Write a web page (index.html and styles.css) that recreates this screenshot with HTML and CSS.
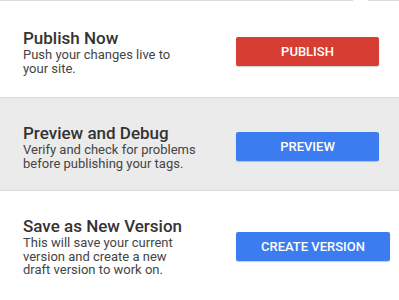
FILE: index.html
```html
<!DOCTYPE html>
<html>
<head>
<meta charset="utf-8">
<link rel="stylesheet" href="styles.css">
</head>
<body>
<div class="panel">
  <div class="row row-first">
    <div class="info">
      <div class="title">Publish Now</div>
      <div class="desc">Push your changes live to<br>your site.</div>
    </div>
    <button class="btn btn-red">PUBLISH</button>
  </div>
  <div class="row row-gray">
    <div class="info">
      <div class="title">Preview and Debug</div>
      <div class="desc">Verify and check for problems<br>before publishing your tags.</div>
    </div>
    <button class="btn btn-blue">PREVIEW</button>
  </div>
  <div class="row">
    <div class="info">
      <div class="title">Save as New Version</div>
      <div class="desc">This will save your current<br>version and create a new<br>draft version to work on.</div>
    </div>
    <button class="btn btn-blue">CREATE VERSION</button>
  </div>
</div>
</body>
</html>
```
FILE: styles.css
```css
html, body {
  margin: 0;
  padding: 0;
  background: #fff;
}
body {
  font-family: Roboto, "Liberation Sans", Arial, sans-serif;
  width: 399px;
  height: 300px;
  overflow: hidden;
}
.panel {
  position: relative;
  border-top: 1px solid #dcdcdc;
}
.panel::before {
  content: "";
  position: absolute;
  top: -1px;
  left: 353px;
  width: 15px;
  height: 1px;
  background: #fff;
}
.row {
  display: grid;
  grid-template-columns: 236px auto;
  align-items: center;
  justify-items: start;
  padding: 25px 0 20px 0;
}
.row-first {
  padding: 27px 0 22px 0;
  border-bottom: 1px solid #d9d9d9;
}
.row-gray {
  background: #ebebeb;
  border-bottom: 1px solid #d9d9d9;
}
.info {
  padding-left: 23px;
}
.title {
  font-size: 17px;
  line-height: 20px;
  font-weight: 500;
  color: #333;
}
.desc {
  font-size: 13px;
  line-height: 13.5px;
  color: #444;
}
.btn {
  font-family: Roboto, "Liberation Sans", Arial, sans-serif;
  font-size: 13px;
  font-weight: 500;
  color: #fff;
  border: none;
  border-radius: 2px;
  height: 29px;
  min-width: 143px;
  padding: 0 25px;
  box-shadow: 0 1px 1px rgba(0,0,0,0.2);
}
.btn-red {
  background: #d73d32;
}
.btn-blue {
  background: #3b7cf0;
}
```
